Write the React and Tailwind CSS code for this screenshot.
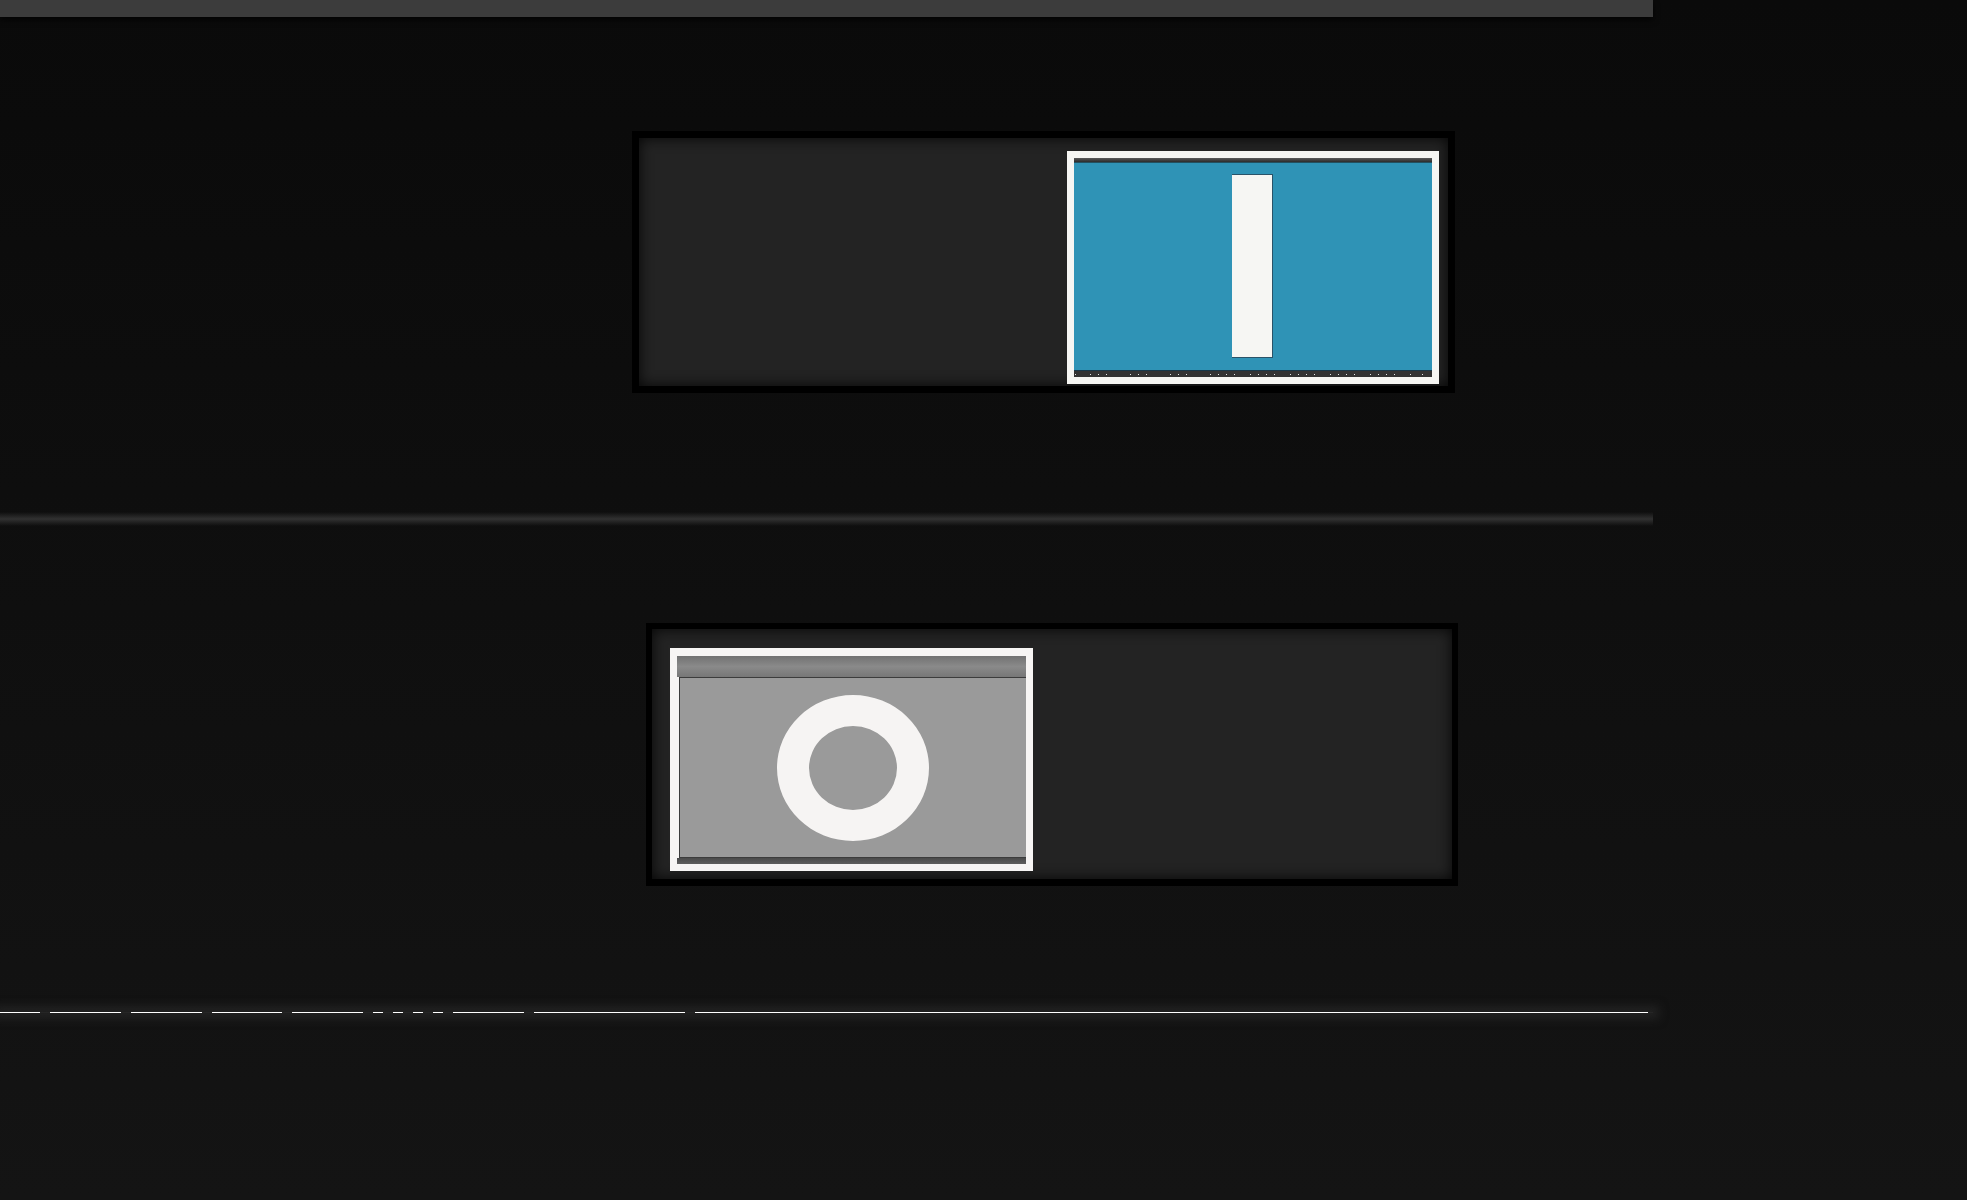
import React from "react";

// gaps in the white rule at the bottom are 10px each
const ruleSegments = [40, 71, 71, 70, 71, 10, 10, 10, 10, 71, 151, 953];

// little white dots along the bottom strip of the "on" knob
const dotXs = [1, 16, 24, 32, 56, 64, 72, 96, 104, 112, 136, 144, 152, 160, 176, 184, 192, 200, 216, 224, 232, 240, 256, 264, 272, 280, 296, 304, 312, 320, 336, 348];

function OnKnob() {
    return (
        <div className="w-[372px] h-[233px] bg-[#f6f6f3] p-[7px] flex">
            <div className="flex-1 flex flex-col">
                <div className="h-[6px] bg-linear-to-b from-[#5c5c5c] to-[#2b2b2b] border-b border-[#23505f]" />
                <div className="flex-1 bg-[#2f93b6] flex justify-center pt-[11px] pb-[12px] border-b border-[#17384a]">
                    <div className="w-[41px] h-[184px] ml-[-2px] bg-[#f6f6f3] border-t border-b border-r border-[#2a5368]" />
                </div>
                <div className="h-[6px] bg-[#333333]">
                    <svg width="358" height="6" className="block">
                        {dotXs.map((x) => (
                            <rect key={x} x={x} y="3" width="1" height="1" fill="#e8e8e8" />
                        ))}
                    </svg>
                </div>
            </div>
        </div>
    );
}

function OffKnob() {
    return (
        <div className="w-[363px] h-[223px] bg-[#f7f5f4] pt-[8px] px-[7px] pb-[7px] flex">
            <div className="flex-1 flex flex-col">
                <div className="h-[21px] bg-linear-to-b from-[#727272] via-[#8a8a8a] to-[#777777]" />
                <div className="flex-1 bg-[#9a9a9a] border-t border-l border-b border-[#3c3c3c] ml-[2px] flex items-center justify-center">
                    <svg width="152" height="146" viewBox="0 0 152 146" className="block">
                        <path
                            fillRule="evenodd"
                            fill="#f6f4f3"
                            d="M76 0A76 73 0 1 0 76 146A76 73 0 1 0 76 0ZM76 31A44 42 0 1 1 76 115A44 42 0 1 1 76 31Z"
                        />
                    </svg>
                </div>
                <div className="h-[6px] bg-linear-to-b from-[#4a4a4a] to-[#5e5e5e]" />
            </div>
        </div>
    );
}

export default function App() {
    return (
        <div className="h-[1200px] w-full bg-linear-to-b from-[#0a0a0a] to-[#141414] overflow-hidden">
            <div className="w-[1653px]">
                {/* top bar */}
                <div className="h-[17px] bg-[#3c3c3c] shadow-[0_3px_6px_rgba(0,0,0,0.7)]" />

                {/* first switch - on */}
                <div className="h-[495px] pt-[114px] pl-[632px]">
                    <div className="w-[823px] h-[262px] bg-black p-[7px]">
                        <div className="h-full bg-[#232323] shadow-[inset_0_0_14px_rgba(0,0,0,0.85)] flex justify-end items-start pt-[13px] pr-[9px]">
                            <OnKnob />
                        </div>
                    </div>
                </div>

                {/* soft divider */}
                <div className="h-[14px] bg-linear-to-b from-transparent via-[#313131] to-transparent" />

                {/* second switch - off */}
                <div className="h-[486px] pt-[97px] pl-[646px]">
                    <div className="w-[812px] h-[263px] bg-black p-[6px] pb-[7px]">
                        <div className="h-full bg-[#232323] shadow-[inset_0_0_14px_rgba(0,0,0,0.85)] flex items-start pt-[19px] pl-[18px]">
                            <OffKnob />
                        </div>
                    </div>
                </div>

                {/* dashed white rule */}
                <div className="shadow-[0_0_10px_6px_rgba(48,48,48,0.55)] bg-[#262626]">
                    <div className="flex gap-[10px] h-[1px]">
                        {ruleSegments.map((w, i) => (
                            <div key={i} className="h-[1px] bg-white shrink-0" style={{ width: w }} />
                        ))}
                    </div>
                </div>
            </div>
        </div>
    );
}
